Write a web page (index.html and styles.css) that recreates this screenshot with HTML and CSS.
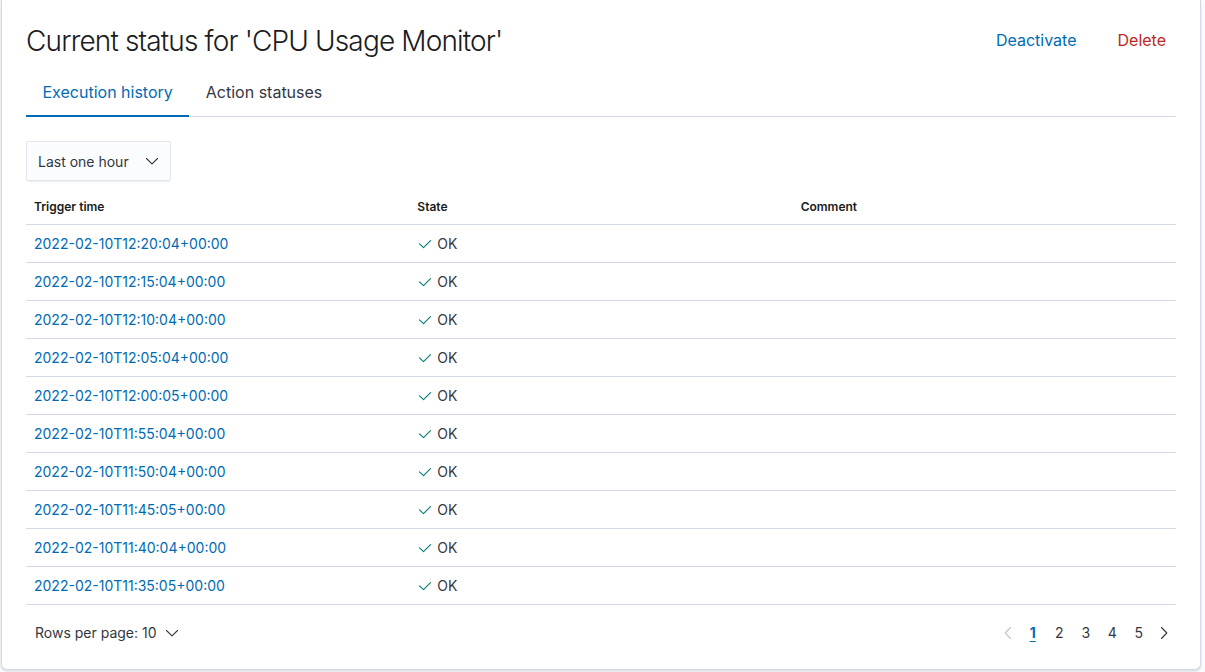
FILE: index.html
```html
<!DOCTYPE html>
<html lang="en">
<head>
<meta charset="utf-8">
<title>Current status</title>
<link rel="stylesheet" href="styles.css">
</head>
<body>
<div class="panel">
  <div class="head">
    <h1 class="title">Current status for 'CPU Usage Monitor'</h1>
    <div class="actions">
      <button class="btn-empty primary">Deactivate</button>
      <button class="btn-empty danger">Delete</button>
    </div>
  </div>
  <div class="tabs">
    <button class="tab selected">Execution history</button>
    <button class="tab">Action statuses</button>
  </div>
  <div class="select">
    <span>Last one hour</span>
    <svg class="chev" width="16" height="16" viewBox="0 0 16 16"><path d="M2.5 5.5l5.5 5.3 5.5-5.3" fill="none" stroke="#343741" stroke-width="1.1" stroke-linecap="round" stroke-linejoin="round"/></svg>
  </div>
  <table class="tbl">
    <thead>
      <tr><th>Trigger time</th><th>State</th><th>Comment</th></tr>
    </thead>
    <tbody>
      <tr><td><a>2022-02-10T12:20:04+00:00</a></td><td><span class="ok"><svg width="16" height="16" viewBox="0 0 16 16"><path d="M2.5 7.8l4 3.8 7-7" fill="none" stroke="#017d73" stroke-width="1.1" stroke-linecap="round" stroke-linejoin="round"/></svg>OK</span></td><td></td></tr>
      <tr><td><a>2022-02-10T12:15:04+00:00</a></td><td><span class="ok"><svg width="16" height="16" viewBox="0 0 16 16"><path d="M2.5 7.8l4 3.8 7-7" fill="none" stroke="#017d73" stroke-width="1.1" stroke-linecap="round" stroke-linejoin="round"/></svg>OK</span></td><td></td></tr>
      <tr><td><a>2022-02-10T12:10:04+00:00</a></td><td><span class="ok"><svg width="16" height="16" viewBox="0 0 16 16"><path d="M2.5 7.8l4 3.8 7-7" fill="none" stroke="#017d73" stroke-width="1.1" stroke-linecap="round" stroke-linejoin="round"/></svg>OK</span></td><td></td></tr>
      <tr><td><a>2022-02-10T12:05:04+00:00</a></td><td><span class="ok"><svg width="16" height="16" viewBox="0 0 16 16"><path d="M2.5 7.8l4 3.8 7-7" fill="none" stroke="#017d73" stroke-width="1.1" stroke-linecap="round" stroke-linejoin="round"/></svg>OK</span></td><td></td></tr>
      <tr><td><a>2022-02-10T12:00:05+00:00</a></td><td><span class="ok"><svg width="16" height="16" viewBox="0 0 16 16"><path d="M2.5 7.8l4 3.8 7-7" fill="none" stroke="#017d73" stroke-width="1.1" stroke-linecap="round" stroke-linejoin="round"/></svg>OK</span></td><td></td></tr>
      <tr><td><a>2022-02-10T11:55:04+00:00</a></td><td><span class="ok"><svg width="16" height="16" viewBox="0 0 16 16"><path d="M2.5 7.8l4 3.8 7-7" fill="none" stroke="#017d73" stroke-width="1.1" stroke-linecap="round" stroke-linejoin="round"/></svg>OK</span></td><td></td></tr>
      <tr><td><a>2022-02-10T11:50:04+00:00</a></td><td><span class="ok"><svg width="16" height="16" viewBox="0 0 16 16"><path d="M2.5 7.8l4 3.8 7-7" fill="none" stroke="#017d73" stroke-width="1.1" stroke-linecap="round" stroke-linejoin="round"/></svg>OK</span></td><td></td></tr>
      <tr><td><a>2022-02-10T11:45:05+00:00</a></td><td><span class="ok"><svg width="16" height="16" viewBox="0 0 16 16"><path d="M2.5 7.8l4 3.8 7-7" fill="none" stroke="#017d73" stroke-width="1.1" stroke-linecap="round" stroke-linejoin="round"/></svg>OK</span></td><td></td></tr>
      <tr><td><a>2022-02-10T11:40:04+00:00</a></td><td><span class="ok"><svg width="16" height="16" viewBox="0 0 16 16"><path d="M2.5 7.8l4 3.8 7-7" fill="none" stroke="#017d73" stroke-width="1.1" stroke-linecap="round" stroke-linejoin="round"/></svg>OK</span></td><td></td></tr>
      <tr><td><a>2022-02-10T11:35:05+00:00</a></td><td><span class="ok"><svg width="16" height="16" viewBox="0 0 16 16"><path d="M2.5 7.8l4 3.8 7-7" fill="none" stroke="#017d73" stroke-width="1.1" stroke-linecap="round" stroke-linejoin="round"/></svg>OK</span></td><td></td></tr>
    </tbody>
  </table>
  <div class="footer">
    <button class="rows">Rows per page: 10
      <svg width="16" height="16" viewBox="0 0 16 16"><path d="M2.5 5.5l5.5 5.3 5.5-5.3" fill="none" stroke="#343741" stroke-width="1.1" stroke-linecap="round" stroke-linejoin="round"/></svg>
    </button>
    <nav class="pager">
      <button class="pg arrow disabled"><svg width="16" height="16" viewBox="0 0 16 16"><path d="M10.5 2.5L5.2 8l5.3 5.5" fill="none" stroke="#c2c3c6" stroke-width="1.1" stroke-linecap="round" stroke-linejoin="round"/></svg></button>
      <button class="pg num current">1</button>
      <button class="pg num">2</button>
      <button class="pg num">3</button>
      <button class="pg num">4</button>
      <button class="pg num">5</button>
      <button class="pg arrow"><svg width="16" height="16" viewBox="0 0 16 16"><path d="M5.5 2.5L10.8 8l-5.3 5.5" fill="none" stroke="#343741" stroke-width="1.1" stroke-linecap="round" stroke-linejoin="round"/></svg></button>
    </nav>
  </div>
</div>
</body>
</html>
```

FILE: styles.css
```css
* { box-sizing: border-box; }
html, body {
  margin: 0;
  padding: 0;
  background: #fafbfd;
  font-family: Inter, "Noto Sans", sans-serif;
  color: #343741;
}
body {
  width: 1205px;
  height: 672px;
  overflow: hidden;
}
.panel {
  width: 1200px;
  margin-left: 1px;
  background: #fff;
  border: 1px solid #d3dae6;
  border-top: 0;
  border-radius: 0 0 6px 6px;
  box-shadow: 0 1px 2px rgba(152,162,179,0.25), 0 2px 3px rgba(152,162,179,0.15);
  padding: 23px 24px 16px 24px;
}
.head {
  display: flex;
  align-items: center;
  justify-content: space-between;
}
.title {
  margin: 0;
  font-size: 28px;
  line-height: 36px;
  font-weight: 300;
  color: #1a1c21;
  letter-spacing: -0.85px;
}
.actions {
  display: flex;
  gap: 21px;
  margin-top: -2px;
}
.btn-empty {
  background: none;
  border: 0;
  font-family: inherit;
  font-size: 16px;
  line-height: 24px;
  padding: 0 10px;
  cursor: pointer;
}
.btn-empty.primary { color: #006bb4; }
.btn-empty.danger { color: #bd271e; }
.tabs {
  margin-top: 10px;
  display: flex;
  box-shadow: inset 0 -1px 0 #d3dae6;
  height: 48px;
}
.tab {
  background: none;
  border: 0;
  font-family: inherit;
  font-size: 16px;
  line-height: 24px;
  padding: 11px 16.5px 13px;
  color: #343741;
  cursor: pointer;
}
.tab.selected {
  color: #006bb4;
  box-shadow: inset 0 -2px 0 #006bb4;
}
.select {
  margin-top: 24px;
  width: 145px;
  height: 40px;
  display: flex;
  align-items: center;
  justify-content: space-between;
  padding: 0 11px 0 12px;
  background: #fbfcfd;
  border-radius: 2px;
  box-shadow: inset 0 0 0 1px rgba(15,39,118,0.1), 0 1px 1px -1px rgba(152,162,179,0.2), 0 3px 2px -2px rgba(152,162,179,0.2);
  font-size: 14px;
  color: #343741;
}
.tbl {
  margin-top: 9px;
  width: 100%;
  border-collapse: collapse;
  table-layout: fixed;
}
.tbl th, .tbl td {
  text-align: left;
  padding: 8px;
  border-bottom: 1px solid #d3dae6;
  vertical-align: middle;
}
.tbl th {
  font-size: 12px;
  line-height: 18px;
  height: 34px;
  padding-top: 8px;
  padding-bottom: 7px;
  font-weight: 600;
  color: #1a1c21;
}
.tbl td {
  font-size: 14px;
  line-height: 21px;
  height: 38px;
  padding-top: 8px;
  padding-bottom: 7px;
}
.tbl a {
  color: #006bb4;
  text-decoration: none;
  display: block;
  height: 21px;
}
.ok {
  display: flex;
  align-items: center;
  gap: 4px;
  height: 21px;
  color: #343741;
}
.footer {
  margin-top: 8px;
  height: 40px;
  display: flex;
  align-items: center;
  justify-content: space-between;
}
.rows {
  background: none;
  border: 0;
  font-family: inherit;
  font-size: 14px;
  color: #343741;
  padding: 0 8px 0 9px;
  display: flex;
  align-items: center;
  gap: 7px;
  height: 32px;
}
.pager {
  display: flex;
  align-items: center;
}
.pg {
  background: none;
  border: 0;
  font-family: inherit;
  font-size: 14px;
  color: #343741;
  padding: 0;
  height: 32px;
  display: flex;
  align-items: center;
  justify-content: center;
}
.pg.arrow { width: 24px; }
.pg.num { width: 26.5px; }
.pg.current {
  color: #006bb4;
  font-weight: 700;
  text-decoration: underline;
  text-underline-offset: 3px;
}
```
